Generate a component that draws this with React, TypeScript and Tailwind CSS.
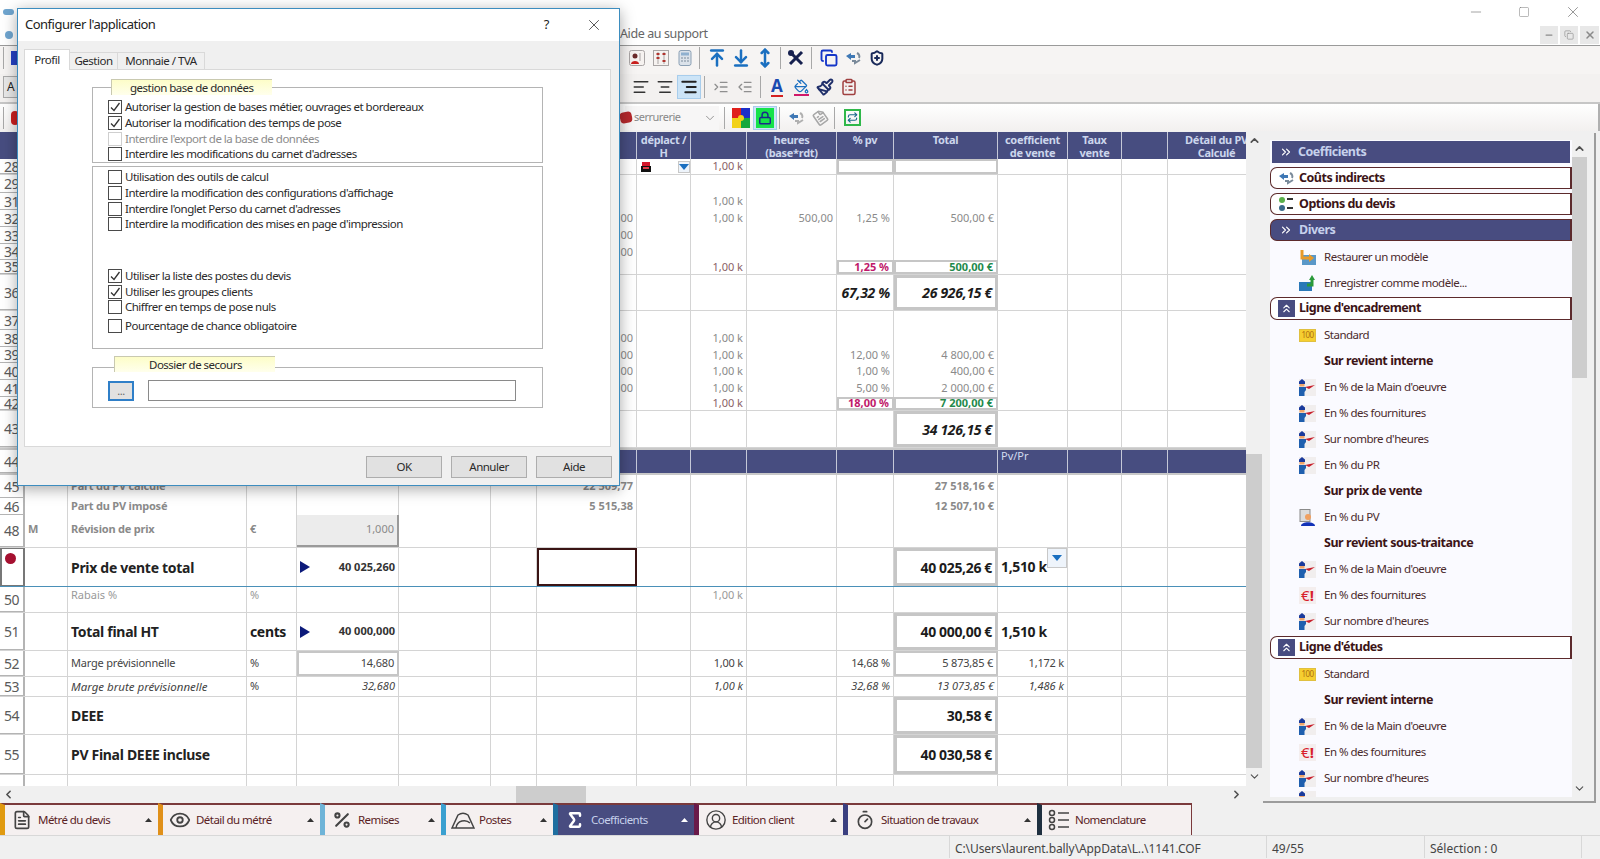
import React from 'react';
import {
  AlignCenter,
  AlignLeft,
  AlignRight,
  ArrowDownToLine,
  ArrowUpToLine,
  ChevronDown,
  ChevronLeft,
  ChevronRight,
  ChevronUp,
  ChevronsRight,
  ChevronsUp,
  CircleUserRound,
  ClipboardList,
  Copy,
  Eye,
  FileText,
  IndentDecrease,
  IndentIncrease,
  Lock,
  Minus,
  MoveVertical,
  Paintbrush,
  PaintBucket,
  Percent,
  Repeat,
  ShieldPlus,
  Sigma,
  Square,
  Timer,
  X,
} from 'lucide-react';
import { twMerge } from 'tailwind-merge';

const GRID =
  'grid grid-cols-[25px_43px_179px_50px_102px_92px_46px_100px_54px_56px_90px_57px_104px_70px_54px_46px_98px]';
const L = 'justify-start';
const BOX = 'border-[3px] border-[#c6c6c6] bg-white';
const BIG = 'text-[14px] font-bold tracking-[-0.35px] text-[#1c1c1c]';
const BIGI = 'text-[14px] font-bold italic tracking-[-0.3px] text-[#1c1c1c]';
const TITLE = 'justify-start text-[14px] font-bold tracking-[-0.3px] text-[#222]';
const DARK = 'tracking-[-0.2px] text-[#444]';
const DARKI = 'italic text-[#444]';
const K = 'text-[#8a5f66]';
const SOFT = 'justify-start font-bold tracking-[-0.2px]';

type Cell = { t?: React.ReactNode; c?: string };
type Row = { h: string; n?: React.ReactNode; nc?: string; cells?: Record<number, Cell>; line?: boolean; band?: boolean; rc?: string };

const Arrow = () => (
  <svg width="10" height="12" viewBox="0 0 10 12" className="shrink-0">
    <polygon points="0,0 10,6 0,12" fill="#0c1a7a" />
  </svg>
);

const PriceArrow = ({ v }: { v: string }) => (
  <span className="flex w-full items-center justify-between font-bold text-[#333]">
    <Arrow />
    {v}
  </span>
);

const DropBtn = ({ className }: { className: string }) => (
  <span className={twMerge('flex items-center justify-center border border-[#c8c8c8] bg-[#eef4fb]', className)}>
    <svg width="10" height="6" viewBox="0 0 10 6">
      <polygon points="0,0 10,0 5,6" fill="#1a6fc0" />
    </svg>
  </span>
);

const rows: Row[] = [
  {
    h: 'h-[16px]', n: '28', line: true,
    cells: {
      8: { c: 'justify-between pr-0', t: <><RedStamp /><DropBtn className="h-[12px] w-[12px]" /></> },
      9: { t: '1,00 k', c: K },
      11: { c: 'border-2 border-[#c6c6c6]' },
      12: { c: 'border-2 border-[#c6c6c6]' },
    },
  },
  { h: 'h-[18px]', n: '29' },
  { h: 'h-[17px]', n: '31', cells: { 9: { t: '1,00 k' } } },
  { h: 'h-[17px]', n: '32', cells: { 7: { t: '100,00' }, 9: { t: '1,00 k' }, 10: { t: '500,00' }, 11: { t: '1,25 %' }, 12: { t: '500,00 €' } } },
  { h: 'h-[17px]', n: '33', cells: { 7: { t: '100,00' } } },
  { h: 'h-[16px]', n: '34', cells: { 7: { t: '100,00' } } },
  {
    h: 'h-[15px]', n: '35', line: true,
    cells: {
      9: { t: '1,00 k', c: K },
      11: { t: '1,25 %', c: 'border-2 border-[#c6c6c6] font-bold text-[#c0186a]' },
      12: { t: '500,00 €', c: 'border-2 border-[#c6c6c6] font-bold text-[#1f8a4c]' },
    },
  },
  { h: 'h-[36px]', n: '36', line: true, cells: { 11: { t: '67,32 %', c: BIGI }, 12: { t: '26 926,15 €', c: twMerge(BOX, BIGI) } } },
  { h: 'h-[19px]', n: '37' },
  { h: 'h-[17px]', n: '38', cells: { 7: { t: '100,00' }, 9: { t: '1,00 k' } } },
  { h: 'h-[16px]', n: '39', cells: { 7: { t: '100,00' }, 9: { t: '1,00 k' }, 11: { t: '12,00 %' }, 12: { t: '4 800,00 €' } } },
  { h: 'h-[17px]', n: '40', cells: { 7: { t: '100,00' }, 9: { t: '1,00 k' }, 11: { t: '1,00 %' }, 12: { t: '400,00 €' } } },
  { h: 'h-[17px]', n: '41', cells: { 7: { t: '100,00' }, 9: { t: '1,00 k' }, 11: { t: '5,00 %' }, 12: { t: '2 000,00 €' } } },
  {
    h: 'h-[14px]', n: '42', line: true,
    cells: {
      9: { t: '1,00 k', c: K },
      11: { t: '18,00 %', c: 'border-2 border-[#c6c6c6] font-bold text-[#c0186a]' },
      12: { t: '7 200,00 €', c: 'border-2 border-[#c6c6c6] font-bold text-[#1f8a4c]' },
    },
  },
  { h: 'h-[37px]', n: '43', line: true, cells: { 12: { t: '34 126,15 €', c: twMerge(BOX, BIGI) } } },
  { h: 'h-[27px]', n: '44', band: true, cells: { 13: { t: 'Pv/Pr', c: 'items-start justify-start leading-[12px] text-[#d3dbef]' } } },
  {
    h: 'h-[23px]', n: '45',
    cells: {
      2: { t: 'Part du PV calculé', c: SOFT },
      7: { t: '22 509,77', c: 'font-bold' },
      12: { t: '27 518,16 €', c: 'font-bold' },
    },
  },
  {
    h: 'h-[17px]', n: '46',
    cells: {
      2: { t: 'Part du PV imposé', c: SOFT },
      7: { t: '5 515,38', c: 'font-bold' },
      12: { t: '12 507,10 €', c: 'font-bold' },
    },
  },
  {
    h: 'h-[33px]', n: '48', line: true,
    cells: {
      1: { t: 'M', c: 'justify-start pb-[3px] font-bold' },
      2: { t: 'Révision de prix', c: twMerge(SOFT, 'pb-[3px]') },
      3: { t: '€', c: 'justify-start pb-[3px] font-bold' },
      4: { t: '1,000', c: 'items-start border-r-2 border-b-2 border-[#9a9a9a] bg-[#ececec] pt-[6px]' },
    },
  },
  {
    h: 'h-[39px]', line: true, rc: 'border-[#4a90b8]',
    n: <span className="block h-[11px] w-[11px] rounded-full bg-[#a51030]" />,
    nc: 'items-start justify-start border-t border-l-2 border-[#777] pt-[4px] pl-[3px]',
    cells: {
      2: { t: 'Prix de vente total', c: TITLE },
      4: { t: <PriceArrow v="40 025,260" /> },
      7: { c: 'border-2 border-[#3a1414]' },
      12: { t: '40 025,26 €', c: twMerge(BOX, BIG) },
      13: { t: <span className="flex w-full justify-between self-start"><span className="pt-[8px]">1,510 k</span><DropBtn className="h-[20px] w-[20px]" /></span>, c: twMerge(BIG, 'justify-start pr-0') },
    },
  },
  {
    h: 'h-[26px]', n: '50', line: true,
    cells: {
      2: { t: 'Rabais %', c: 'items-start justify-start text-[#999]' },
      3: { t: '%', c: 'items-start justify-start text-[#999]' },
      9: { t: '1,00 k', c: 'items-start text-[#999]' },
    },
  },
  {
    h: 'h-[38px]', n: '51', line: true,
    cells: {
      2: { t: 'Total final HT', c: TITLE },
      3: { t: 'cents', c: twMerge(BIG, L) },
      4: { t: <PriceArrow v="40 000,000" /> },
      12: { t: '40 000,00 €', c: twMerge(BOX, BIG) },
      13: { t: '1,510 k', c: twMerge(BIG, L) },
    },
  },
  {
    h: 'h-[26px]', n: '52', line: true,
    cells: {
      2: { t: 'Marge prévisionnelle', c: twMerge(L, DARK) },
      3: { t: '%', c: twMerge(L, DARK) },
      4: { t: '14,680', c: twMerge('border-2 border-[#c6c6c6] bg-white', DARK) },
      9: { t: '1,00 k', c: DARK },
      11: { t: '14,68 %', c: DARK },
      12: { t: '5 873,85 €', c: twMerge('border-2 border-[#c6c6c6] bg-white', DARK) },
      13: { t: '1,172 k', c: DARK },
    },
  },
  {
    h: 'h-[20px]', n: '53', line: true,
    cells: {
      2: { t: 'Marge brute prévisionnelle', c: twMerge(L, DARKI, 'text-[11.5px]') },
      3: { t: '%', c: twMerge(L, DARK) },
      4: { t: '32,680', c: DARKI },
      9: { t: '1,00 k', c: DARKI },
      11: { t: '32,68 %', c: DARKI },
      12: { t: '13 073,85 €', c: DARKI },
      13: { t: '1,486 k', c: DARKI },
    },
  },
  { h: 'h-[38px]', n: '54', line: true, cells: { 2: { t: 'DEEE', c: TITLE }, 12: { t: '30,58 €', c: twMerge(BOX, BIG) } } },
  { h: 'h-[40px]', n: '55', line: true, cells: { 2: { t: 'PV Final DEEE incluse', c: TITLE }, 12: { t: '40 030,58 €', c: twMerge(BOX, BIG) } } },
  { h: 'h-[12px]', n: '' },
];

function RedStamp() {
  return (
    <svg width="12" height="12" viewBox="0 0 12 12" className="shrink-0">
      <rect x="1" y="5" width="10" height="6" fill="#111" />
      <rect x="2" y="1" width="8" height="4" fill="#d3162a" />
      <rect x="3" y="6" width="6" height="2" fill="#e23a46" />
    </svg>
  );
}

function GridRow({ row }: { row: Row }) {
  const cols = Array.from({ length: 17 }, (_, i) => i);
  return (
    <div
      className={twMerge(
        GRID,
        row.h,
        row.line && 'border-b border-[#d4d4d4]',
        row.band && 'border-y-2 border-[#c8c8c8] bg-[#474d80]',
        row.rc,
      )}
    >
      {cols.map((i) => {
        const cell = row.cells?.[i];
        return (
          <div
            key={i}
            className={twMerge(
              'flex items-center justify-end overflow-hidden border-r border-[#d4d4d4] px-[3px] text-[11px] whitespace-nowrap text-[#8a8a8a]',
              row.band && 'border-[#c5c8d8]',
              i === 0 && 'justify-center border-r-2 border-b border-[#b4b4b4] bg-white px-0 text-[14px] tracking-[-0.5px] text-[#5a5a5a]',
              i === 0 && row.nc,
              cell?.c,
            )}
          >
            {i === 0 ? row.n : cell?.t}
          </div>
        );
      })}
    </div>
  );
}

const headers: Record<number, React.ReactNode> = {
  8: <>déplact /<br />H</>,
  10: <>heures<br />(base*rdt)</>,
  11: '% pv',
  12: 'Total',
  13: <>coefficient<br />de vente</>,
  14: <>Taux<br />vente</>,
  16: <>Détail du PV<br />Calculé</>,
};

function GridHeader() {
  return (
    <div className={twMerge(GRID, 'h-[27px] bg-[#474d80]')}>
      {Array.from({ length: 17 }, (_, i) => (
        <div key={i} className="overflow-hidden border-r border-[#c5c8d8] pt-[1px] text-center text-[11px] leading-[13px] font-bold tracking-[-0.3px] whitespace-nowrap text-[#ccd6ec]">
          {headers[i]}
        </div>
      ))}
    </div>
  );
}

function Cell24({ children, className }: { children?: React.ReactNode; className?: string }) {
  return <span className={twMerge('flex h-6 w-6 shrink-0 items-center justify-center', className)}>{children}</span>;
}

const Sep = ({ className }: { className?: string }) => <span className={twMerge('mx-[3px] h-[22px] w-px shrink-0 bg-[#a8a8a8]', className)} />;

function ToolsIcon() {
  return (
    <svg width="18" height="18" viewBox="0 0 18 18">
      <path d="M3 15 15 3" stroke="#16204f" strokeWidth="3" />
      <path d="M3 3l12 12" stroke="#16204f" strokeWidth="3" />
      <circle cx="4" cy="4" r="3" fill="#16204f" />
    </svg>
  );
}

function CardIcon({ accent }: { accent: string }) {
  return (
    <svg width="18" height="18" viewBox="0 0 18 18">
      <rect x="1.5" y="1.5" width="15" height="15" rx="2" fill="#f6f2f0" stroke="#a9a5a5" />
      <circle cx="7" cy="7" r="2.5" fill="#6b2a2a" />
      <path d="M3 15c0-4 8-4 8 0z" fill={accent} />
      <path d="M12 4v8" stroke="#a9a5a5" />
    </svg>
  );
}

function CalcIcon() {
  return (
    <svg width="18" height="18" viewBox="0 0 18 18">
      <rect x="3" y="1.5" width="12" height="15" rx="2" fill="#dbe2ea" stroke="#8ba0b5" />
      <rect x="5" y="3.5" width="8" height="3" fill="#8fb0cf" />
      <path d="M5 9h8M5 12h8" stroke="#7a8a9a" strokeDasharray="2 1" />
    </svg>
  );
}

function AbacusIcon() {
  return (
    <svg width="18" height="18" viewBox="0 0 18 18">
      <rect x="1.5" y="1.5" width="15" height="15" fill="#f6f2f0" stroke="#a9a5a5" />
      <path d="M6 3v12M12 3v12" stroke="#a9a5a5" />
      <path d="M4.5 5h3M10.500 5h3M4.500 9h3M10.500 12h3" stroke="#b0342e" strokeWidth="2" />
    </svg>
  );
}

function SwapIcon({ color = '#7a8a9a' }: { color?: string }) {
  return (
    <svg width="18" height="16" viewBox="0 0 18 16" fill="none">
      <path d="M2 6 7 3v2h4v3H7v2z" fill="#3f78b5" />
      <path d="M16 10l-5 3v-2H8" stroke={color} strokeWidth="2" />
      <path d="M13 3c2 1 3 3 2 5" stroke={color} strokeWidth="2" />
    </svg>
  );
}

function PuzzleIcon() {
  return (
    <svg width="18" height="20" viewBox="0 0 18 20">
      <rect width="9" height="10" fill="#e0201c" />
      <rect x="9" width="9" height="10" fill="#1d2fc7" />
      <rect y="10" width="9" height="10" fill="#f2d21a" />
      <rect x="9" y="10" width="9" height="10" fill="#18a83c" />
      <circle cx="9" cy="10" r="3" fill="#f2d21a" />
    </svg>
  );
}

function TitleBar() {
  return (
    <div className="flex h-[46px] shrink-0 flex-col border-b border-[#9a9a9a] bg-white">
      <div className="flex h-[24px] items-center">
        <span className="ml-[3px] h-[6px] w-[11px] rounded-sm bg-[#6fa5cf]" />
        <span className="ml-auto flex w-[132px] items-center justify-between pr-[18px] text-[#777]">
          <Minus size={16} strokeWidth={1} />
          <Square size={12} strokeWidth={1} />
          <X size={18} strokeWidth={1} />
        </span>
      </div>
      <div className="flex h-[21px] items-center">
        <span className="ml-[5px] h-[8px] w-[8px] rounded-sm bg-[#6fa5cf]" />
        <span className="ml-[607px] [font-family:'Noto_Sans',sans-serif] text-[12.5px] tracking-[-0.4px] text-[#666]">Aide au support</span>
        <span className="mr-[1px] ml-auto flex gap-[2px] text-[#8a8a8a]">
          <span className="flex h-[18px] w-[18px] items-center justify-center bg-[#e8e8e8]"><Minus size={10} strokeWidth={3} /></span>
          <span className="flex h-[18px] w-[18px] items-center justify-center bg-[#e8e8e8]"><Copy size={10} strokeWidth={1.5} /></span>
          <span className="flex h-[18px] w-[19px] items-center justify-center bg-[#e8e8e8]"><X size={12} strokeWidth={3} /></span>
        </span>
      </div>
    </div>
  );
}

function Toolbars() {
  const blue = '#1a6fc0';
  const gray = '#8f8f8f';
  return (
    <>
      <div className="flex h-[28px] shrink-0 items-center bg-[#f6f4f3] pb-[4px] pl-[3px]">
        <Sep className="mx-0" />
        <span className="ml-[7px] h-[14px] w-[8px] bg-[#2542c4]" />
        <div className="ml-[606px] flex items-center">
          <Cell24><CardIcon accent="#c9201e" /></Cell24>
          <Cell24><AbacusIcon /></Cell24>
          <Cell24><CalcIcon /></Cell24>
          <Sep className="mr-[5px] ml-[2px]" />
          <Cell24><ArrowUpToLine size={20} color={blue} strokeWidth={3} /></Cell24>
          <Cell24><ArrowDownToLine size={20} color={blue} strokeWidth={3} /></Cell24>
          <Cell24><MoveVertical size={20} color={blue} strokeWidth={3} /></Cell24>
          <Sep />
          <Cell24><ToolsIcon /></Cell24>
          <Sep className="mr-[5px]" />
          <Cell24><Copy size={18} color="#1536c8" strokeWidth={2.5} /></Cell24>
          <Cell24><SwapIcon /></Cell24>
          <Cell24><ShieldPlus size={16} color="#1a2a5a" strokeWidth={3} /></Cell24>
        </div>
      </div>
      <div className="flex h-[30px] shrink-0 items-center border-b-2 border-[#c6c6c6] bg-[#f3f1f0] pb-[2px] pl-[3px]">
        <span className="flex h-[22px] w-[30px] items-center border border-[#aaa] bg-[#e8e8e8] pl-[3px] text-[12px] text-[#222]">A</span>
        <div className="ml-[596px] flex items-center">
          <Cell24><AlignLeft size={18} color="#333" strokeWidth={2} /></Cell24>
          <Cell24><AlignCenter size={18} color="#333" strokeWidth={2} /></Cell24>
          <Cell24 className="border border-[#a8cdec] bg-[#cce4f7]"><AlignRight size={18} color="#222" strokeWidth={2.5} /></Cell24>
          <Sep className="mr-[4px]" />
          <Cell24><IndentIncrease size={16} color={gray} /></Cell24>
          <Cell24><IndentDecrease size={16} color={gray} /></Cell24>
          <Sep className="mr-[4px]" />
          <Cell24>
            <span className="border-b-2 border-[#d42020] [font-family:'Liberation_Serif',serif] text-[17px] leading-[18px] font-bold text-[#1a4ab0]">A</span>
          </Cell24>
          <Cell24>
            <span className="border-b-2 border-[#d0186a] leading-none"><PaintBucket size={15} color="#1a6fc0" /></span>
          </Cell24>
          <Cell24><Paintbrush size={18} color="#1f2f6a" strokeWidth={2.5} /></Cell24>
          <Cell24><ClipboardList size={18} color="#a04040" /></Cell24>
        </div>
      </div>
      <div className="flex h-[27px] shrink-0 items-center border-r-2 border-[#b0b0b0] bg-gradient-to-b from-white to-[#f2f0ef] pl-[3px]">
        <Sep className="mx-0" />
        <span className="ml-[7px] h-[14px] w-[8px] rounded-sm bg-[#cc1f1f]" />
        <div className="ml-[606px] flex items-center">
          <span className="flex h-[24px] w-[94px] items-center bg-[#f7f6f6] text-[#888]">
            <span className="mr-[2px] -ml-[5px] h-[11px] w-[12px] -rotate-12 rounded-sm bg-[#b5282c]" />
            <span className="text-[11px] tracking-[-0.5px]">serrurerie</span>
            <ChevronDown size={14} className="mr-[2px] ml-auto" strokeWidth={1.5} />
          </span>
          <Sep className="ml-[5px]" />
          <Cell24 className="ml-[1px]"><PuzzleIcon /></Cell24>
          <Cell24 className="border border-[#a8cdec] bg-[#cce4f7]">
            <span className="flex h-[20px] w-[18px] items-center justify-center bg-[#15e24a]"><Lock size={14} color="#1a2a8a" strokeWidth={2.5} /></span>
          </Cell24>
          <Sep className="mx-[2px]" />
          <Cell24 className="ml-[2px]"><SwapIcon color="#b0b0b0" /></Cell24>
          <Cell24><FileText size={15} color="#a8a8a8" strokeWidth={2.5} className="rotate-[-35deg]" /></Cell24>
          <Sep className="mx-[2px]" />
          <Cell24 className="ml-[3px]">
            <span className="flex h-[17px] w-[17px] items-center justify-center border-2 border-[#2fb84a]"><Repeat size={11} color="#1a6a8a" strokeWidth={2.5} /></span>
          </Cell24>
        </div>
      </div>
    </>
  );
}

function WorkerIcon() {
  return (
    <svg width="17" height="17" viewBox="0 0 17 17" className="shrink-0">
      <rect width="17" height="17" fill="#f1eeee" />
      <path d="M0 2.500 3 0l3 2.500V5H0z" fill="#1a3a9c" />
      <rect x="0.500" y="5" width="5" height="2.500" fill="#f0a468" />
      <path d="M0 8h7v3L5.500 13v4H0z" fill="#1f5fae" />
      <polygon points="6,8 16,6 10,10" fill="#c8202c" />
    </svg>
  );
}

function HundredIcon() {
  return (
    <span className="flex h-[13px] w-[17px] shrink-0 items-center justify-center border border-[#e0c040] bg-[#f6cf30] text-[8px] leading-none text-[#b07010]">100</span>
  );
}

function PersonIcon() {
  return (
    <svg width="17" height="17" viewBox="0 0 17 17" className="shrink-0">
      <rect x="1" y="0.500" width="10" height="12" fill="#dcdcdc" stroke="#8a8a8a" />
      <circle cx="9" cy="8" r="3" fill="#f0a060" />
      <path d="M2 17c0-5 14-5 14 0z" fill="#1232b8" />
    </svg>
  );
}

function EuroIcon() {
  return (
    <span className="flex w-[17px] shrink-0 justify-center bg-[#f4eeee] text-[15px] leading-[17px] font-bold tracking-normal text-[#d8202c]">
      <span className="font-normal">€</span>!
    </span>
  );
}

function RestoreIcon() {
  return (
    <svg width="17" height="17" viewBox="0 0 17 17" className="shrink-0">
      <rect x="3" y="6" width="14" height="10" fill="#5a98c8" />
      <path d="M3 1v8h9" stroke="#e89a28" strokeWidth="3" fill="none" />
      <polygon points="10,5 15,9 10,13" fill="#e89a28" />
    </svg>
  );
}

function SaveModelIcon() {
  return (
    <svg width="17" height="17" viewBox="0 0 17 17" className="shrink-0">
      <rect x="0" y="7" width="13" height="9" fill="#2a78b8" />
      <path d="M8 10h5V4" stroke="#2a9a3a" strokeWidth="3" fill="none" />
      <polygon points="10,5 13,0 16,5" fill="#2a9a3a" />
    </svg>
  );
}

function PanelHeader({ children, icon, dark, square, className }: { children: React.ReactNode; icon: React.ReactNode; dark?: boolean; square?: boolean; className?: string }) {
  return (
    <div
      className={twMerge(
        'flex h-[23px] shrink-0 items-center rounded-l-[7px] border border-r-2 border-[#5c2a2c] bg-white text-[12.5px] font-bold tracking-[-0.5px] text-[#3c1416]',
        dark && 'bg-[#484c80] text-[#c6d1ec]',
        square && 'mx-[2px] h-[22px] rounded-none border-0',
        className,
      )}
    >
      <span className={twMerge('flex w-[28px] shrink-0 justify-center pl-[2px]', square && 'w-[26px]')}>{icon}</span>
      {children}
    </div>
  );
}

const ItemRow = ({ icon, children }: { icon?: React.ReactNode; children: React.ReactNode }) => (
  <div className="flex h-[26px] shrink-0 items-center pl-[29px] text-[11.5px] tracking-[-0.5px] text-[#4a2a2c]">
    <span className="flex w-[25px] shrink-0 items-center">{icon}</span>
    {children}
  </div>
);

const Bold = ({ children }: { children: React.ReactNode }) => (
  <div className="flex h-[26px] shrink-0 items-center pl-[54px] text-[12.5px] font-bold tracking-[-0.45px] text-[#3c1416]">{children}</div>
);

const SquareUp = () => (
  <span className="flex h-[17px] w-[17px] items-center justify-center bg-[#484c80]">
    <ChevronsUp size={13} color="#fff" />
  </span>
);

function SidePanel() {
  return (
    <div className="mt-[2px] flex h-[670px] w-[333px] shrink-0 border-r-2 border-b-2 border-[#9c9c9c] bg-[#f0f0f0] pt-[7px] pl-[7px]">
      <div className="flex h-[657px] w-[302px] flex-col overflow-hidden bg-[#fafaff]">
        <PanelHeader dark square className="mt-[1px]" icon={<ChevronsRight size={14} color="#fff" />}>Coefficients</PanelHeader>
        <PanelHeader className="mt-[4px] h-[22px]" icon={<SwapIcon />}>Coûts indirects</PanelHeader>
        <PanelHeader className="mt-[4px] h-[22px]" icon={
          <svg width="16" height="16" viewBox="0 0 16 16">
            <circle cx="4" cy="4" r="3" fill="#5ab04a" />
            <circle cx="4" cy="12" r="3" fill="#3a6a8a" />
            <path d="M9 3h6M9 12h6" stroke="#333" strokeWidth="2" />
          </svg>
        }>Options du devis</PanelHeader>
        <PanelHeader dark className="mt-[4px] h-[22px]" icon={<ChevronsRight size={14} color="#fff" />}>Divers</PanelHeader>
        <div className="mt-[3px]" />
        <ItemRow icon={<RestoreIcon />}>Restaurer un modèle</ItemRow>
        <ItemRow icon={<SaveModelIcon />}>Enregistrer comme modèle...</ItemRow>
        <PanelHeader className="mt-[1px]" icon={<SquareUp />}>Ligne d'encadrement</PanelHeader>
        <div className="mt-[2px]" />
        <ItemRow icon={<HundredIcon />}>Standard</ItemRow>
        <Bold>Sur revient interne</Bold>
        <ItemRow icon={<WorkerIcon />}>En % de la Main d'oeuvre</ItemRow>
        <ItemRow icon={<WorkerIcon />}>En % des fournitures</ItemRow>
        <ItemRow icon={<WorkerIcon />}>Sur nombre d'heures</ItemRow>
        <ItemRow icon={<WorkerIcon />}>En % du PR</ItemRow>
        <Bold>Sur prix de vente</Bold>
        <ItemRow icon={<PersonIcon />}>En % du PV</ItemRow>
        <Bold>Sur revient sous-traitance</Bold>
        <ItemRow icon={<WorkerIcon />}>En % de la Main d'oeuvre</ItemRow>
        <ItemRow icon={<EuroIcon />}>En % des fournitures</ItemRow>
        <ItemRow icon={<WorkerIcon />}>Sur nombre d'heures</ItemRow>
        <PanelHeader className="mt-[2px]" icon={<SquareUp />}>Ligne d'études</PanelHeader>
        <div className="mt-[2px]" />
        <ItemRow icon={<HundredIcon />}>Standard</ItemRow>
        <Bold>Sur revient interne</Bold>
        <ItemRow icon={<WorkerIcon />}>En % de la Main d'oeuvre</ItemRow>
        <ItemRow icon={<EuroIcon />}>En % des fournitures</ItemRow>
        <ItemRow icon={<WorkerIcon />}>Sur nombre d'heures</ItemRow>
        <div className="ml-[29px] h-[6px] w-[17px] shrink-0 overflow-hidden"><WorkerIcon /></div>
      </div>
      <div className="flex h-[657px] w-[15px] flex-col items-center bg-[#f0f0f0]">
        <span className="flex h-[17px] items-center"><ChevronUp size={13} strokeWidth={3} color="#505050" /></span>
        <span className="h-[221px] w-full bg-[#cdcdcd]" />
        <span className="mt-auto flex h-[17px] items-center"><ChevronDown size={13} strokeWidth={2} color="#505050" /></span>
      </div>
    </div>
  );
}

function PostesIcon() {
  return (
    <svg width="24" height="20" viewBox="0 0 24 20" fill="none" stroke="#444" strokeWidth="1.500">
      <path d="M1 18 7 5c3-2 7-2 10 0l6 13z" />
      <path d="M5 18c1-8 10-9 14-5" />
    </svg>
  );
}

function NomenclIcon() {
  return (
    <svg width="22" height="22" viewBox="0 0 22 22" fill="none" stroke="#444" strokeWidth="1.500">
      <circle cx="4" cy="4" r="2.500" />
      <circle cx="4" cy="11" r="2.500" />
      <circle cx="4" cy="18" r="2.500" />
      <path d="M10 4h11M10 11h11M10 18h11" />
    </svg>
  );
}

const tabs = [
  { label: 'Métré du devis', w: 'w-[158px]', accent: 'border-l-[#e09a10]', icon: <FileText size={20} color="#444" />, arrow: true },
  { label: 'Détail du métré', w: 'w-[162px]', accent: 'border-l-[#e0901a]', icon: <Eye size={22} color="#444" />, arrow: true },
  { label: 'Remises', w: 'w-[121px]', accent: 'border-l-[#6fb4d8]', icon: <Percent size={20} color="#444" strokeWidth={2.5} />, arrow: true },
  { label: 'Postes', w: 'w-[112px]', accent: 'border-l-[#3aa0d0]', icon: <PostesIcon />, arrow: true },
  { label: 'Coefficients', w: 'w-[141px]', accent: 'border-l-[#1f6fa0]', icon: <Sigma size={20} color="#fff" strokeWidth={3} />, arrow: true, active: true },
  { label: 'Edition client', w: 'w-[149px]', accent: 'border-l-[#6a1a4a]', icon: <CircleUserRound size={22} color="#444" strokeWidth={1.500} />, arrow: true },
  { label: 'Situation de travaux', w: 'w-[194px]', accent: 'border-l-[#3a3f80]', icon: <Timer size={20} color="#444" />, arrow: true },
  { label: 'Nomenclature', w: 'w-[155px]', accent: 'border-l-[#1f3040]', icon: <NomenclIcon />, arrow: false },
];

function Tabs() {
  return (
    <div className="flex h-[32px] shrink-0 items-stretch bg-[#f0f0f0]">
      {tabs.map((t) => (
        <div
          key={t.label}
          className={twMerge(
            'flex items-center border-t-2 border-l-[5px] border-t-[#7a3a3c] bg-[#f5f0f0] text-[11.5px] tracking-[-0.55px] text-[#5a2224]',
            t.w,
            t.accent,
            t.active && 'bg-[#484c80] text-[#c6d1ec]',
            !t.arrow && 'border-r border-r-[#7a3a3c]',
          )}
        >
          <span className="flex w-[33px] shrink-0 justify-center">{t.icon}</span>
          {t.label}
          {t.arrow && (
            <svg width="7" height="4" viewBox="0 0 7 4" className="mr-[6px] ml-auto">
              <polygon points="0,4 7,4 3.500,0" fill={t.active ? '#fff' : '#333'} />
            </svg>
          )}
        </div>
      ))}
    </div>
  );
}

function StatusBar() {
  return (
    <div className="flex h-[23px] shrink-0 items-stretch border-t border-[#d8d8d8] bg-[#f0f0f0] pl-[949px] [font-family:'Noto_Sans',sans-serif] text-[12px] text-[#444]">
      <span className="flex w-[317px] items-center border-l border-[#d8d8d8] pt-[3px] pl-[5px] tracking-[-0.1px]">C:\Users\laurent.bally\AppData\L..\1141.COF</span>
      <span className="flex w-[158px] items-center border-l border-[#d8d8d8] pt-[3px] pl-[5px]">49/55</span>
      <span className="flex w-[158px] items-center border-x border-[#d8d8d8] pt-[3px] pl-[5px]">Sélection : 0</span>
    </div>
  );
}

function Check({ label, checked, disabled, className }: { label: string; checked?: boolean; disabled?: boolean; className?: string }) {
  return (
    <div className={twMerge('flex h-[16px] items-center', disabled && 'text-[#8c8c8c]', className)}>
      <span className={twMerge('mr-[3px] flex h-[14px] w-[14px] shrink-0 items-center justify-center border border-[#4a4a4a] bg-white', disabled && 'border-[#cfcfcf]')}>
        {checked && (
          <svg width="12" height="12" viewBox="0 0 12 12" fill="none">
            <path d="M2 6.500 5 9.500 10.500 2" stroke="#333" strokeWidth="1.300" />
          </svg>
        )}
      </span>
      {label}
    </div>
  );
}

function Legend({ children, className }: { children: string; className: string }) {
  return (
    <div className={twMerge('absolute flex h-[16px] w-[161px] items-center border-t border-l border-[#c9c9b0] bg-gradient-to-b from-[#fdfdc8] to-[#ffffec]', className)}>
      {children}
    </div>
  );
}

function ConfigDialog() {
  return (
    <div className="absolute top-[8px] left-[17px] flex h-[478px] w-[603px] flex-col border border-[#3d8dbf] bg-[#f0f0f0] text-[11.5px] tracking-[-0.5px] text-[#2a2a2a] shadow-[0_3px_14px_rgba(0,0,0,0.35)]">
      <div className="flex h-[32px] shrink-0 items-center bg-white pl-[7px] [font-family:'Noto_Sans',sans-serif] text-[13px] tracking-[-0.5px] text-[#222]">
        Configurer l'application
        <span className="ml-auto text-[13px]">?</span>
        <X size={18} strokeWidth={1} className="mr-[16px] ml-[36px]" />
      </div>
      <div className="flex h-[28px] shrink-0 items-end pl-[6px]">
        <span className="z-10 -mb-px flex h-[21px] w-[46px] items-start justify-center border border-b-0 border-[#d9d9d9] bg-white pt-[1px]">Profil</span>
        <span className="flex h-[17px] w-[48px] items-center justify-center border border-b-0 border-l-0 border-[#d9d9d9]">Gestion</span>
        <span className="flex h-[17px] w-[87px] items-center justify-center border border-b-0 border-l-0 border-[#d9d9d9]">Monnaie / TVA</span>
      </div>
      <div className="ml-[6px] h-[378px] w-[587px] shrink-0 border border-[#d9d9d9] bg-white pt-[17px] pl-[67px]">
        <div className="relative h-[76px] w-[451px] border border-[#b4b4b4] pt-[11px] pl-[15px]">
          <Legend className="top-[-9px] left-[18px] pl-[18px]">gestion base de données</Legend>
          <Check checked label="Autoriser la gestion de bases métier, ouvrages et bordereaux" />
          <Check checked label="Autoriser la modification des temps de pose" />
          <Check disabled label="Interdire l'export de la base de données" className="h-[15px]" />
          <Check label="Interdire les modifications du carnet d'adresses" className="h-[15px]" />
        </div>
        <div className="mt-[3px] h-[183px] w-[451px] border border-[#b4b4b4] pt-[2px] pl-[15px]">
          <Check label="Utilisation des outils de calcul" />
          <Check label="Interdire la modification  des configurations d'affichage" />
          <Check label="Interdire l'onglet Perso du carnet d'adresses" className="h-[15px]" />
          <Check label="Interdire la modification des mises en page d'impression" className="h-[15px]" />
          <Check checked label="Utiliser la liste des postes du devis" className="mt-[37px]" />
          <Check checked label="Utiliser les groupes clients" className="h-[15px]" />
          <Check label="Chiffrer en temps de pose nuls" />
          <Check label="Pourcentage de chance obligatoire" className="mt-[3px]" />
        </div>
        <div className="relative mt-[18px] flex h-[41px] w-[451px] items-start border border-[#b4b4b4] pt-[12px] pl-[15px]">
          <Legend className="top-[-12px] left-[21px] pl-[34px]">Dossier de secours</Legend>
          <span className="mt-[1px] flex h-[20px] w-[26px] items-center justify-center border-2 border-[#2f7fc8] bg-[#e1e1e1] text-[11px] text-[#666]">...</span>
          <span className="ml-[14px] h-[21px] w-[368px] border border-[#8a8a8a] bg-white" />
        </div>
      </div>
      <div className="mt-[9px] flex justify-end gap-[9px] pr-[7px]">
        {['OK', 'Annuler', 'Aide'].map((b) => (
          <span key={b} className="flex h-[22px] w-[76px] items-center justify-center border border-[#adadad] bg-[#e1e1e1]">{b}</span>
        ))}
      </div>
    </div>
  );
}

export default function App() {
  return (
    <div className="relative flex h-[859px] w-[1600px] flex-col overflow-hidden bg-[#f0f0f0] [font-family:'Liberation_Sans',Arial,sans-serif]">
      <TitleBar />
      <Toolbars />
      <div className="flex h-[672px] shrink-0">
        <div className="flex w-[1263px] shrink-0 flex-col pt-px">
          <div className="flex h-[654px]">
            <div className="w-[1246px] shrink-0 overflow-hidden bg-white">
              <GridHeader />
              {rows.map((r, i) => <GridRow key={i} row={r} />)}
            </div>
            <div className="flex w-[16px] flex-col items-center bg-[#f0f0f0]">
              <span className="flex h-[17px] items-center"><ChevronUp size={13} strokeWidth={3} color="#505050" /></span>
              <span className="mt-[305px] h-[314px] w-full bg-[#cdcdcd]" />
              <span className="flex h-[17px] items-center"><ChevronDown size={13} strokeWidth={2} color="#505050" /></span>
            </div>
          </div>
          <div className="flex h-[17px] w-[1246px] items-center bg-[#f0f0f0]">
            <ChevronLeft size={13} strokeWidth={3} color="#505050" className="ml-[2px]" />
            <span className="ml-[501px] h-[17px] w-[70px] bg-[#cdcdcd]" />
            <ChevronRight size={13} strokeWidth={3} color="#505050" className="mr-[3px] ml-auto" />
          </div>
        </div>
        <SidePanel />
      </div>
      <Tabs />
      <StatusBar />
      <ConfigDialog />
    </div>
  );
}
